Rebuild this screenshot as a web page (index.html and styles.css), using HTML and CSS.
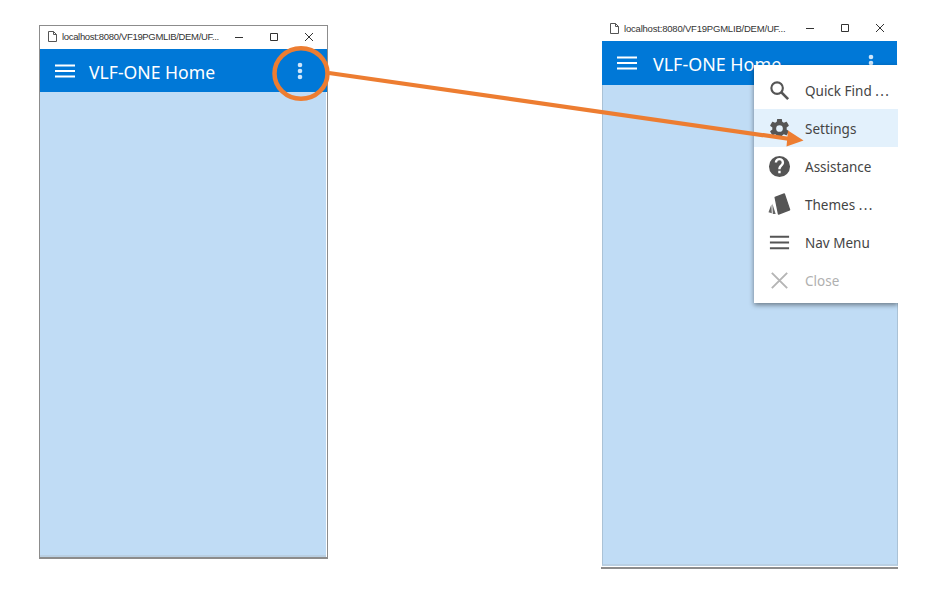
FILE: index.html
```html
<!DOCTYPE html>
<html lang="en">
<head>
<meta charset="utf-8">
<title>VLF-ONE Home</title>
<link rel="stylesheet" href="styles.css">
</head>
<body>
<section class="win win-left">
  <div class="titlebar">
    <svg class="doc" viewBox="0 0 9 11" width="9" height="11"><path d="M.5.5h5l3 3v7h-8zM5.500.5v3h3" fill="#fff" stroke="#555" stroke-width="1"/></svg>
    <span class="url">localhost:8080/VF19PGMLIB/DEM/UF...</span>
    <div class="controls">
      <svg viewBox="0 0 10 10" width="10" height="10"><path d="M1 5.500h8" stroke="#333"/></svg>
      <svg viewBox="0 0 10 10" width="10" height="10"><path d="M1.500 1.500h7v7h-7z" fill="none" stroke="#333"/></svg>
      <svg viewBox="0 0 10 10" width="10" height="10"><path d="M1 1l8 8M9 1l-8 8" stroke="#333"/></svg>
    </div>
  </div>
  <div class="appbar">
    <svg class="burger" viewBox="0 0 20 14" width="20" height="14"><path d="M0 1.500h20M0 7h20M0 12.500h20" stroke="#fff" stroke-width="2"/></svg>
    <span class="apptitle">VLF-ONE Home</span>
    <svg class="dots" viewBox="0 0 6 18" width="6" height="18"><circle cx="3" cy="3" r="2.300"/><circle cx="3" cy="9" r="2.300"/><circle cx="3" cy="15" r="2.300"/></svg>
  </div>
  <div class="content"></div>
</section>

<section class="win win-right">
  <div class="titlebar">
    <svg class="doc" viewBox="0 0 9 11" width="9" height="11"><path d="M.5.5h5l3 3v7h-8zM5.500.5v3h3" fill="#fff" stroke="#555" stroke-width="1"/></svg>
    <span class="url">localhost:8080/VF19PGMLIB/DEM/UF...</span>
    <div class="controls">
      <svg viewBox="0 0 10 10" width="10" height="10"><path d="M1 5.500h8" stroke="#333"/></svg>
      <svg viewBox="0 0 10 10" width="10" height="10"><path d="M1.500 1.500h7v7h-7z" fill="none" stroke="#333"/></svg>
      <svg viewBox="0 0 10 10" width="10" height="10"><path d="M1 1l8 8M9 1l-8 8" stroke="#333"/></svg>
    </div>
  </div>
  <div class="appbar">
    <svg class="burger" viewBox="0 0 20 14" width="20" height="14"><path d="M0 1.500h20M0 7h20M0 12.500h20" stroke="#fff" stroke-width="2"/></svg>
    <span class="apptitle">VLF-ONE Home</span>
    <svg class="dots" viewBox="0 0 6 18" width="6" height="18"><circle cx="3" cy="3" r="2.300"/><circle cx="3" cy="9" r="2.300"/><circle cx="3" cy="15" r="2.300"/></svg>
  </div>
  <div class="content"></div>
  <ul class="menu">
    <li class="item">
      <svg class="ico" viewBox="0 0 24 24"><circle cx="9.500" cy="9.500" r="6" fill="none" stroke="#555" stroke-width="2.200"/><path d="M14 14l7 7" stroke="#555" stroke-width="2.800"/></svg>
      <span class="label">Quick Find <span class="ell">...</span></span>
    </li>
    <li class="item active">
      <svg class="ico" viewBox="0 0 24 24"><path fill="#555" fill-rule="evenodd" d="M19.430 12.980c.04-.32.07-.64.07-.98s-.03-.66-.07-.98l2.110-1.650c.19-.15.24-.42.120-.64l-2-3.460c-.12-.22-.39-.3-.61-.22l-2.490 1c-.52-.4-1.080-.73-1.690-.98l-.38-2.650C14.460 2.180 14.250 2 14 2h-4c-.25 0-.46.18-.49.420l-.38 2.650c-.61.25-1.170.59-1.690.98l-2.490-1c-.23-.09-.49 0-.61.220l-2 3.460c-.13.22-.07.49.12.64l2.110 1.650c-.04.32-.07.650-.07.980s.03.66.07.98l-2.110 1.650c-.19.15-.24.42-.12.64l2 3.460c.12.22.39.3.61.22l2.490-1c.52.4 1.080.73 1.690.98l.38 2.650c.03.24.24.42.49.42h4c.25 0 .46-.18.49-.42l.38-2.650c.61-.25 1.170-.59 1.690-.98l2.490 1c.23.09.49 0 .61-.22l2-3.460c.12-.22.07-.49-.12-.64l-2.110-1.650zM12 15.500a3.500 3.500 0 1 1 0-7 3.500 3.500 0 0 1 0 7z"/></svg>
      <span class="label">Settings</span>
    </li>
    <li class="item">
      <svg class="ico" viewBox="0 0 24 24"><path fill="#555" d="M12 1a11 11 0 1 0 0 22 11 11 0 0 0 0-22zm1.200 18h-2.500v-2.500h2.500zm2.500-8.200l-1.100 1.100c-.9.900-1.400 1.600-1.400 3h-2.500v-.6c0-1.300.5-2.400 1.400-3.300l1.500-1.500c.4-.4.700-1 .7-1.600a2.400 2.400 0 0 0-4.800 0H7a4.900 4.900 0 0 1 9.800 0c0 1.100-.4 2.100-1.100 2.900z"/></svg>
      <span class="label">Assistance</span>
    </li>
    <li class="item">
      <svg class="ico" viewBox="0 0 24 24"><path fill="#555" stroke="#555" stroke-width="1.500" stroke-linejoin="round" d="M7.500 4.500l9.500-3.500 5.500 16.500-11.500 4.500z"/><path fill="#666" d="M.5 20l3-8 .5 9zM4.500 11L8 22H5z"/></svg>
      <span class="label">Themes <span class="ell">...</span></span>
    </li>
    <li class="item">
      <svg class="ico" viewBox="0 0 24 24"><path d="M2 6h20M2 12h20M2 18h20" stroke="#555" stroke-width="2"/></svg>
      <span class="label">Nav Menu</span>
    </li>
    <li class="item disabled">
      <svg class="ico" viewBox="0 0 24 24"><path d="M4 4l16 16M20 4L4 20" stroke="#b5b5b5" stroke-width="2"/></svg>
      <span class="label">Close</span>
    </li>
  </ul>
</section>

<svg class="annotation" width="943" height="600" viewBox="0 0 943 600">
  <ellipse cx="301" cy="73.500" rx="26.500" ry="25.300" fill="none" stroke="#ed7d31" stroke-width="4.500"/>
  <path d="M329 73L790 139" fill="none" stroke="#ed7d31" stroke-width="4.200"/>
  <path d="M803.500 140.500L788 130.500 786.500 146.500z" fill="#ed7d31"/>
</svg>
</body>
</html>
```
FILE: styles.css
```css
html, body {
  margin: 0;
  background: #fff;
}
body {
  position: relative;
  width: 943px;
  height: 600px;
  overflow: hidden;
  font-family: "Noto Sans", "Open Sans", sans-serif;
}
.win {
  position: absolute;
  display: flex;
  flex-direction: column;
  box-sizing: border-box;
}
.win-left {
  left: 39px;
  top: 25px;
  width: 289px;
  height: 534px;
  border: 1px solid #8c8c8c;
  border-bottom-width: 2px;
}
.win-right {
  left: 601px;
  top: 19px;
  width: 297px;
  height: 550px;
  border-bottom: 2px solid #8c8c8c;
  padding-bottom: 1px;
}
.titlebar {
  display: flex;
  align-items: center;
  box-sizing: border-box;
  height: 23px;
  flex: none;
  padding: 0 0 2px 8px;
  background: #fff;
}
.win-right .titlebar {
  height: 22px;
  padding: 0 0 4px 9px;
}
.doc {
  flex: none;
}
.url {
  margin-left: 5px;
  font-family: "Liberation Sans", Arial, sans-serif;
  font-size: 9.500px;
  letter-spacing: -.33px;
  color: #333;
  white-space: nowrap;
}
.win-right .url {
  letter-spacing: -.2px;
}
.controls {
  display: flex;
  gap: 25px;
  margin-left: auto;
  padding-right: 13px;
}
.appbar {
  display: flex;
  align-items: center;
  flex: none;
  height: 43px;
  margin: 0 1px 0 0;
  padding: 0 23px 0 15px;
  background: #0078d7;
  color: #fff;
}
.win-left .appbar {
  margin: 0;
  padding-right: 24px;
}
.win-right .appbar {
  height: 44px;
  margin-left: 1px;
}
.apptitle {
  margin-left: 14px;
  padding-top: 2px;
  font-size: 17.600px;
  white-space: nowrap;
}
.win-right .apptitle {
  margin-left: 16px;
  font-size: 17.900px;
}
.dots {
  margin-left: auto;
  fill: #cfe6fa;
}
.content {
  flex: 1;
  background: #c0dcf5;
  border-bottom: 2px solid #b9cfe2;
}
.win-left .content {
  margin: 0 1px 0 0;
}
.win-right .content {
  margin: 0 0 0 1px;
  border-left: 1px solid #aac2d6;
  border-right: 1px solid #aac2d6;
}
.menu {
  position: absolute;
  left: 153px;
  top: 46px;
  width: 144px;
  margin: 0;
  padding: 6px 0 4px;
  list-style: none;
  background: #fff;
  box-shadow: 0 2px 5px rgba(0, 0, 0, .45);
  clip-path: inset(-10px 0 -10px -10px);
}
.item {
  display: flex;
  align-items: center;
  gap: 14px;
  height: 38px;
  padding-left: 14px;
  font-size: 13.500px;
  color: #444;
  white-space: nowrap;
}
.label {
  padding-top: 2px;
}
.item.active {
  background: #e3f1fc;
}
.item.disabled {
  color: #b0b0b0;
}
.ell {
  letter-spacing: 1.400px;
}
.ico {
  width: 23px;
  height: 23px;
  flex: none;
}
.annotation {
  position: absolute;
  left: 0;
  top: 0;
  pointer-events: none;
}
```
